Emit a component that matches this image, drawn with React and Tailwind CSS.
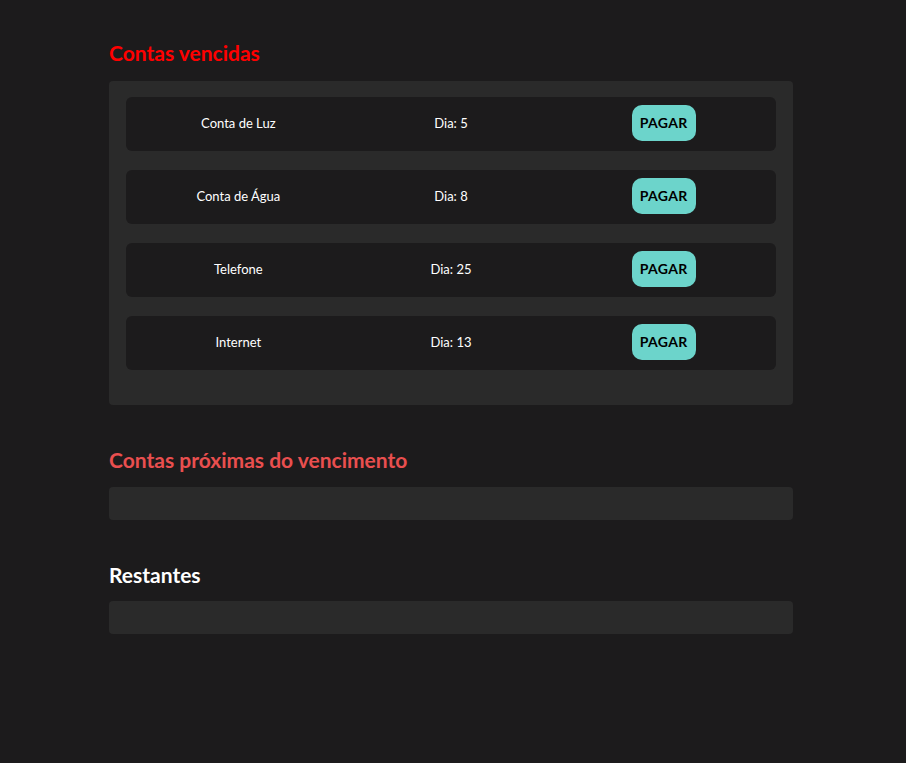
import { useState } from 'react';

const vencidas = [
  { id: 1, nome: 'Conta de Luz', dia: 5 },
  { id: 2, nome: 'Conta de Água', dia: 8 },
  { id: 3, nome: 'Telefone', dia: 25 },
  { id: 4, nome: 'Internet', dia: 13 },
];

function ContaRow({ conta, onPagar }) {
  return (
    <div className="mb-[19px] grid h-[54px] grid-cols-3 items-center rounded-md bg-[#1c1b1c] text-[13px] text-white">
      <span className="pl-2 text-center">{conta.nome}</span>
      <span className="text-center">Dia: {conta.dia}</span>
      <div className="flex justify-center pr-2 pb-[2px]">
        <button
          type="button"
          onClick={() => onPagar(conta.id)}
          className="h-9 w-16 rounded-[10px] bg-[#6cd4cb] text-sm font-bold tracking-wide text-black"
        >
          PAGAR
        </button>
      </div>
    </div>
  );
}

export default function App() {
  const [contas, setContas] = useState(vencidas);

  const handlePagar = (id) => {
    setContas((prev) => prev.filter((c) => c.id !== id));
  };

  return (
    <div className="min-h-[763px] bg-[#1c1b1c] font-['Lato',sans-serif]">
      <div className="ml-[109px] w-[684px] pt-[39px]">
        <h2 className="mb-[14px] text-[21px] leading-7 font-bold text-[#ff0000]">Contas vencidas</h2>
        <div className="rounded bg-[#2a2a2a] px-[17px] pt-4 pb-4">
          {contas.map((conta) => (
            <ContaRow key={conta.id} conta={conta} onPagar={handlePagar} />
          ))}
        </div>

        <h2 className="mt-[41px] mb-[13px] text-[21px] leading-7 font-bold text-[#e94f4f]">
          Contas próximas do vencimento
        </h2>
        <div className="h-[33px] rounded bg-[#2a2a2a]" />

        <h2 className="mt-[41px] mb-3 text-[21px] leading-7 font-bold text-white">Restantes</h2>
        <div className="h-[33px] rounded bg-[#2a2a2a]" />
      </div>
    </div>
  );
}
